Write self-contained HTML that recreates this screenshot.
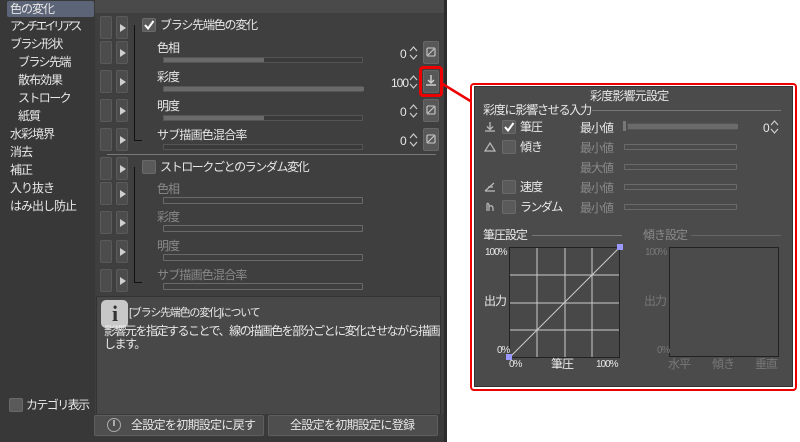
<!DOCTYPE html>
<html><head><meta charset="utf-8"><style>
*{margin:0;padding:0;box-sizing:border-box}
body{width:800px;height:442px;background:#fff;position:relative;overflow:hidden;font-family:"Liberation Sans","Noto Sans CJK JP",sans-serif;font-size:12px;color:#e8e8e8;letter-spacing:-1px}
.a{position:absolute;white-space:nowrap}
.t{position:absolute;white-space:nowrap;line-height:14px}
.k{letter-spacing:-1.6px}
.g{color:#8a8a8a}
.rb{position:absolute;width:12px;height:23px;background:#4c4c4c;border:1px solid #5a5a5a;border-radius:2px}
.ar{position:absolute;width:12px;height:23px;background:#4c4c4c;border:1px solid #5a5a5a;border-radius:2px}
.ar:after{content:"";position:absolute;left:3px;top:7px;border-left:6px solid #cfcfcf;border-top:4px solid transparent;border-bottom:4px solid transparent}
.sl{position:absolute;height:6px;background:#3a3a3a;border:1px solid #555}
.sl i{position:absolute;left:0;top:0;bottom:0;background:#6a6a6a}
.so{position:absolute;height:7px;border:1px solid #6a6a6a;border-radius:1px}
.btn{position:absolute;width:16px;height:23px;background:#585858;border:1px solid #666;border-radius:2px}
.bi{position:absolute;width:10px;height:10px}
.cb{position:absolute;width:14px;height:14px;background:#5a5a5a;border:1px solid #6a6a6a;border-radius:2px}
.sp{position:absolute;width:9px;height:16px}
</style></head><body>
<svg width="0" height="0" style="position:absolute"><defs><g id="spn"><path d="M1 6 L4.5 2 L8 6 M1 10 L4.5 14 L8 10" fill="none" stroke="#ccc" stroke-width="1.2"/></g>
<g id="nul"><rect x="1" y="1" width="8" height="8" rx="1" fill="none" stroke="#ccc" stroke-width="1.1"/><path d="M2 8 L8 2" stroke="#ccc" stroke-width="1.1"/></g></defs></svg>
<!-- main window -->
<div class="a" style="left:0;top:0;width:447px;height:442px;background:#383838"></div>
<div class="a" style="left:95px;top:0;width:349px;height:13px;background:#4a4a4a"></div>
<div class="a" style="left:95px;top:13px;width:349px;height:401px;background:#3f3f3f"></div>
<div class="a" style="left:444px;top:0;width:3px;height:442px;background:#2c2c2c"></div>
<!-- sidebar -->
<div class="a" style="left:7px;top:1px;width:87px;height:16px;background:#5c6478;border-radius:2px"></div>
<div class="t" style="left:10px;top:2px">色の変化</div>
<div class="t" style="left:10px;top:19px;letter-spacing:-3.3px">アンチエイリアス</div>
<div class="t k" style="left:10px;top:37px">ブラシ形状</div>
<div class="t k" style="left:18px;top:55px">ブラシ先端</div>
<div class="t" style="left:18px;top:73px">散布効果</div>
<div class="t k" style="left:18px;top:91px">ストローク</div>
<div class="t" style="left:18px;top:109px">紙質</div>
<div class="t" style="left:10px;top:127px">水彩境界</div>
<div class="t" style="left:10px;top:145px">消去</div>
<div class="t" style="left:10px;top:163px">補正</div>
<div class="t" style="left:10px;top:181px">入り抜き</div>
<div class="t" style="left:10px;top:199px">はみ出し防止</div>
<div class="cb" style="left:9px;top:398px"></div>
<div class="t k" style="left:26px;top:398px">カテゴリ表示</div>
<!-- rows buttons -->
<div class="rb" style="left:100px;top:16px"></div><div class="ar" style="left:116px;top:16px"></div>
<div class="rb" style="left:100px;top:41px"></div><div class="ar" style="left:116px;top:41px"></div>
<div class="rb" style="left:100px;top:70px"></div><div class="ar" style="left:116px;top:70px"></div>
<div class="rb" style="left:100px;top:99px"></div><div class="ar" style="left:116px;top:99px"></div>
<div class="rb" style="left:100px;top:128px"></div><div class="ar" style="left:116px;top:128px"></div>
<div class="rb" style="left:100px;top:157px"></div><div class="ar" style="left:116px;top:157px"></div>
<div class="rb" style="left:100px;top:182px"></div><div class="ar" style="left:116px;top:182px"></div>
<div class="rb" style="left:100px;top:211px"></div><div class="ar" style="left:116px;top:211px"></div>
<div class="rb" style="left:100px;top:240px"></div><div class="ar" style="left:116px;top:240px"></div>
<div class="rb" style="left:100px;top:269px"></div><div class="ar" style="left:116px;top:269px"></div>
<!-- tree lines -->
<div class="a" style="left:134px;top:25px;width:1px;height:116px;background:#111"></div>
<div class="a" style="left:134px;top:140px;width:8px;height:1px;background:#111"></div>
<div class="a" style="left:134px;top:167px;width:1px;height:116px;background:#111"></div>
<div class="a" style="left:134px;top:282px;width:8px;height:1px;background:#111"></div>
<!-- group 1 -->
<div class="cb" style="left:142px;top:18px"></div>
<svg class="a" style="left:143px;top:19px" width="12" height="12"><path d="M2 6 L5 9.5 L10.5 2" fill="none" stroke="#fff" stroke-width="2"/></svg>
<div class="t" style="left:160px;top:18px;letter-spacing:-1.2px">ブラシ先端色の変化</div>
<div class="t" style="left:157px;top:41px">色相</div>
<div class="sl" style="left:163px;top:57px;width:200px"><i style="width:100px"></i></div>
<div class="t" style="left:400px;top:47px">0</div><svg class="sp" style="left:409px;top:45px"><use href="#spn"/></svg>
<div class="btn" style="left:423px;top:41px"></div><svg class="bi" style="left:426px;top:47px"><use href="#nul"/></svg>
<div class="t" style="left:157px;top:70px">彩度</div>
<div class="sl" style="left:163px;top:86px;width:200px"><i style="width:200px"></i></div>
<div class="t" style="left:391px;top:76px">100</div><svg class="sp" style="left:409px;top:74px"><use href="#spn"/></svg>
<div class="a" style="left:423px;top:70px;width:16px;height:23px;background:#585858;border:1px solid #666;border-radius:2px"></div>
<svg class="a" style="left:424px;top:72px" width="14" height="18"><path d="M7 3 V11 M4 8 L7 11 L10 8 M2 13 H12" fill="none" stroke="#ccc" stroke-width="1.5"/></svg>
<div class="a" style="left:419px;top:66px;width:24px;height:31px;border:3px solid #e00;border-radius:4px"></div>
<div class="t" style="left:157px;top:99px">明度</div>
<div class="sl" style="left:163px;top:115px;width:200px"><i style="width:100px"></i></div>
<div class="t" style="left:400px;top:105px">0</div><svg class="sp" style="left:409px;top:103px"><use href="#spn"/></svg>
<div class="btn" style="left:423px;top:99px"></div><svg class="bi" style="left:426px;top:105px"><use href="#nul"/></svg>
<div class="t" style="left:157px;top:128px;letter-spacing:-0.8px">サブ描画色混合率</div>
<div class="sl" style="left:163px;top:144px;width:200px"></div>
<div class="t" style="left:400px;top:134px">0</div><svg class="sp" style="left:409px;top:132px"><use href="#spn"/></svg>
<div class="btn" style="left:423px;top:128px"></div><svg class="bi" style="left:426px;top:134px"><use href="#nul"/></svg>
<div class="a" style="left:107px;top:154px;width:329px;height:1px;background:#777"></div>
<!-- group 2 -->
<div class="cb" style="left:142px;top:160px"></div>
<div class="t" style="left:160px;top:160px;letter-spacing:-1.4px">ストロークごとのランダム変化</div>
<div class="t g" style="left:157px;top:182px">色相</div><div class="so" style="left:163px;top:197px;width:200px"></div>
<div class="t g" style="left:157px;top:210px">彩度</div><div class="so" style="left:163px;top:225px;width:200px"></div>
<div class="t g" style="left:157px;top:239px">明度</div><div class="so" style="left:163px;top:254px;width:200px"></div>
<div class="t g" style="left:157px;top:268px;letter-spacing:-0.8px">サブ描画色混合率</div><div class="so" style="left:163px;top:283px;width:200px"></div>
<!-- info -->
<div class="a" style="left:96px;top:296px;width:345px;height:119px;background:#484848;border:1px solid #333"></div>
<div class="a" style="left:101px;top:300px;width:27px;height:28px;background:#c8c8c8;border-radius:5px;color:#333;font-weight:bold;font-size:22px;text-align:center;line-height:28px;font-family:'Liberation Serif',serif">i</div>
<div class="t" style="left:129px;top:306px;font-size:11px;letter-spacing:-1.2px">[ブラシ先端色の変化]について</div>
<div class="t" style="left:104px;top:325px;line-height:13px;letter-spacing:-1.5px">影響元を指定することで、線の描画色を部分ごとに変化させながら描画</div>
<div class="t" style="left:104px;top:338px;line-height:13px;letter-spacing:-1.5px">します。</div>
<!-- bottom buttons -->
<div class="a" style="left:95px;top:414px;width:349px;height:23px;background:#3a3a3a"></div>
<div class="a" style="left:94px;top:415px;width:170px;height:21px;background:#4e4e4e;border:1px solid #5e5e5e;border-radius:2px"></div>
<div class="a" style="left:107px;top:418px;width:14px;height:14px;border:1px solid #aaa;border-radius:50%"></div>
<div class="a" style="left:113px;top:420px;width:2px;height:6px;background:#aaa"></div>
<div class="t" style="left:131px;top:418px;letter-spacing:-0.7px">全設定を初期設定に戻す</div>
<div class="a" style="left:268px;top:415px;width:170px;height:21px;background:#4e4e4e;border:1px solid #5e5e5e;border-radius:2px"></div>
<div class="t" style="left:290px;top:418px;letter-spacing:-0.7px">全設定を初期設定に登録</div>
<!-- connector -->
<svg class="a" style="left:436px;top:78px" width="40" height="30"><line x1="5" y1="5" x2="36" y2="24" stroke="#e00" stroke-width="2.5"/></svg>
<!-- popup -->
<div class="a" style="left:470px;top:83px;width:327px;height:308px;border:2px solid #e00;border-radius:4px;background:#fff"></div>
<div class="a" style="left:474px;top:86px;width:319px;height:301px;background:#4b4b4b;border:1px solid #333"></div>
<div class="t" style="left:590px;top:89px;letter-spacing:-0.8px">彩度影響元設定</div>
<div class="t" style="left:483px;top:103px;letter-spacing:-1.2px">彩度に影響させる入力</div>
<div class="a" style="left:592px;top:110px;width:189px;height:1px;background:#777"></div>
<svg class="a" style="left:484px;top:121px" width="12" height="12"><path d="M6 1 V8 M3 5.5 L6 8.5 L9 5.5 M1 10 H11" fill="none" stroke="#bbb" stroke-width="1.3"/></svg>
<div class="cb" style="left:502px;top:120px"></div>
<svg class="a" style="left:503px;top:121px" width="12" height="12"><path d="M2 6 L5 9.5 L10.5 2" fill="none" stroke="#fff" stroke-width="2"/></svg>
<div class="t" style="left:520px;top:120px">筆圧</div>
<div class="t" style="left:580px;top:121px">最小値</div>
<div class="a" style="left:623px;top:121px;width:3px;height:10px;background:#777"></div>
<div class="sl" style="left:627px;top:123px;width:110px;height:7px"><i style="width:110px"></i></div>
<div class="t" style="left:763px;top:121px">0</div><svg class="sp" style="left:770px;top:119px"><use href="#spn"/></svg>
<svg class="a" style="left:484px;top:141px" width="12" height="12"><path d="M6 2 L11 10 H1 Z" fill="none" stroke="#bbb" stroke-width="1.2"/></svg>
<div class="cb" style="left:502px;top:140px"></div><div class="t" style="left:520px;top:140px">傾き</div>
<div class="t g" style="left:580px;top:141px">最小値</div><div class="so" style="left:624px;top:144px;width:113px;height:6px"></div>
<div class="t g" style="left:580px;top:161px">最大値</div><div class="so" style="left:624px;top:164px;width:113px;height:6px"></div>
<svg class="a" style="left:484px;top:181px" width="12" height="12"><path d="M1 10 H11 M1 10 L10 2 M4 6 H9" fill="none" stroke="#bbb" stroke-width="1.2"/></svg>
<div class="cb" style="left:502px;top:180px"></div><div class="t" style="left:520px;top:180px">速度</div>
<div class="t g" style="left:580px;top:181px">最小値</div><div class="so" style="left:624px;top:184px;width:113px;height:6px"></div>
<svg class="a" style="left:484px;top:201px" width="12" height="12"><path d="M3 10 L3 3 Q4 1 5 4 L5 10 M5 6 Q8 3 9 7 L9 10" fill="none" stroke="#bbb" stroke-width="1.2"/></svg>
<div class="cb" style="left:502px;top:200px"></div><div class="t k" style="left:520px;top:200px">ランダム</div>
<div class="t g" style="left:580px;top:201px">最小値</div><div class="so" style="left:624px;top:204px;width:113px;height:6px"></div>
<div class="t" style="left:483px;top:228px">筆圧設定</div>
<div class="a" style="left:532px;top:235px;width:90px;height:1px;background:#777"></div>
<div class="t g" style="left:643px;top:228px">傾き設定</div>
<div class="a" style="left:691px;top:235px;width:90px;height:1px;background:#666"></div>
<svg class="a" style="left:505px;top:243px" width="120" height="120">
<rect x="4.5" y="4.5" width="110" height="110" fill="#484848" stroke="#222"/>
<g stroke="#ccc" stroke-width="1">
<line x1="32" y1="5" x2="32" y2="114"/><line x1="60" y1="5" x2="60" y2="114"/><line x1="87" y1="5" x2="87" y2="114"/>
<line x1="5" y1="32" x2="114" y2="32"/><line x1="5" y1="60" x2="114" y2="60"/><line x1="5" y1="87" x2="114" y2="87"/>
<line x1="5" y1="114" x2="114" y2="5"/></g>
<rect x="1" y="111" width="6" height="6" fill="#99f"/><rect x="112" y="1" width="6" height="6" fill="#99f"/>
</svg>
<div class="t" style="left:485px;top:246px;font-size:10px">100%</div>
<div class="t" style="left:484px;top:294px">出力</div>
<div class="t" style="left:497px;top:344px;font-size:10px">0%</div>
<div class="t" style="left:509px;top:358px;font-size:10px">0%</div>
<div class="t" style="left:551px;top:357px">筆圧</div>
<div class="t" style="left:596px;top:358px;font-size:10px">100%</div>
<div class="a" style="left:669px;top:247px;width:110px;height:110px;border:1px solid #222"></div>
<div class="t" style="left:645px;top:246px;font-size:10px;color:#777">100%</div>
<div class="t" style="left:644px;top:294px;color:#777">出力</div>
<div class="t" style="left:657px;top:344px;font-size:10px;color:#777">0%</div>
<div class="t" style="left:668px;top:357px;color:#777">水平</div>
<div class="t" style="left:712px;top:357px;color:#777">傾き</div>
<div class="t" style="left:755px;top:357px;color:#777">垂直</div>
</body></html>
